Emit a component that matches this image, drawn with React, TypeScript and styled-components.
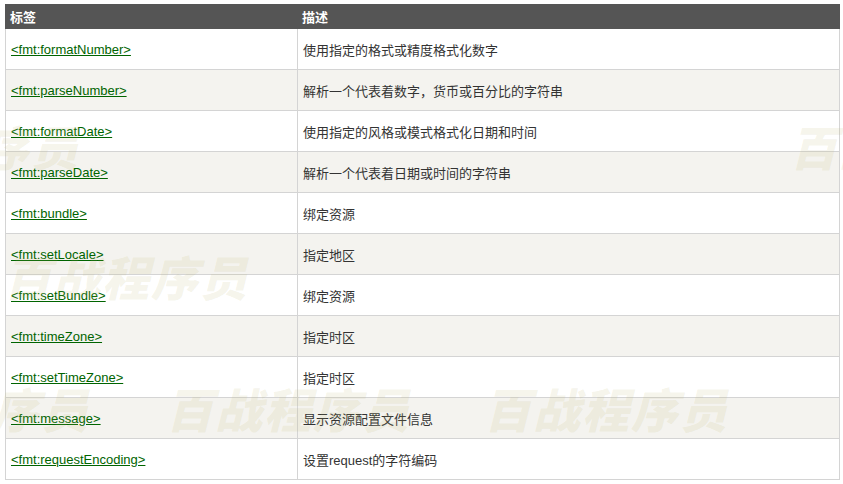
import React from "react";
import styled, { createGlobalStyle } from "styled-components";

const Global = createGlobalStyle`
  html, body { margin: 0; padding: 0; background: #fff; }
  body { font-family: "Liberation Sans", Arial, "Noto Sans CJK SC", sans-serif; }
`;

const Page = styled.div`
  position: relative;
  width: 843px;
  height: 484px;
  padding: 4px 0 0 5px;
  box-sizing: border-box;
  overflow: hidden;
`;

const Table = styled.table`
  border-collapse: collapse;
  width: 835px;
  table-layout: fixed;
  font-size: 13px;
`;

const HeadCell = styled.th<{ $w?: number }>`
  background: #555555;
  color: #ffffff;
  font-weight: bold;
  text-align: left;
  height: 24px;
  padding: 0 4px;
  border: 1px solid #555555;
  box-sizing: border-box;
  font-size: 13px;
  width: ${(p) => (p.$w ? `${p.$w}px` : "auto")};
`;

const Row = styled.tr<{ $alt: boolean }>`
  background: ${(p) => (p.$alt ? "#f4f3ef" : "#ffffff")};
`;

const Cell = styled.td`
  border: 1px solid #d4d4d4;
  height: 40px;
  padding: 0 5px;
  color: #333333;
  vertical-align: middle;
`;

const Link = styled.a`
  color: #006400;
  text-decoration: underline;
`;

const Mark = styled.span<{ $x: number; $y: number }>`
  position: absolute;
  left: ${(p) => p.$x}px;
  top: ${(p) => p.$y}px;
  font-family: "Noto Sans CJK SC", sans-serif;
  font-weight: 900;
  font-style: italic;
  font-size: 47px;
  line-height: 1;
  letter-spacing: 2px;
  white-space: nowrap;
  color: rgba(190, 180, 110, 0.15);
  pointer-events: none;
  z-index: 2;
`;

const rows: [string, string][] = [
  ["<fmt:formatNumber>", "使用指定的格式或精度格式化数字"],
  ["<fmt:parseNumber>", "解析一个代表着数字，货币或百分比的字符串"],
  ["<fmt:formatDate>", "使用指定的风格或模式格式化日期和时间"],
  ["<fmt:parseDate>", "解析一个代表着日期或时间的字符串"],
  ["<fmt:bundle>", "绑定资源"],
  ["<fmt:setLocale>", "指定地区"],
  ["<fmt:setBundle>", "绑定资源"],
  ["<fmt:timeZone>", "指定时区"],
  ["<fmt:setTimeZone>", "指定时区"],
  ["<fmt:message>", "显示资源配置文件信息"],
  ["<fmt:requestEncoding>", "设置request的字符编码"],
];

const marks = [
  { x: -165, y: 122 },
  { x: 790, y: 122 },
  { x: 4, y: 252 },
  { x: -155, y: 384 },
  { x: 166, y: 384 },
  { x: 484, y: 384 },
];

export default function App() {
  return (
    <Page>
      <Global />
      <Table>
        <thead>
          <tr>
            <HeadCell $w={292}>标签</HeadCell>
            <HeadCell>描述</HeadCell>
          </tr>
        </thead>
        <tbody>
          {rows.map(([tag, desc], i) => (
            <Row key={tag} $alt={i % 2 === 1}>
              <Cell>
                <Link href="#">{tag}</Link>
              </Cell>
              <Cell>{desc}</Cell>
            </Row>
          ))}
        </tbody>
      </Table>
      {marks.map((m, i) => (
        <Mark key={i} $x={m.x} $y={m.y}>
          百战程序员
        </Mark>
      ))}
    </Page>
  );
}
